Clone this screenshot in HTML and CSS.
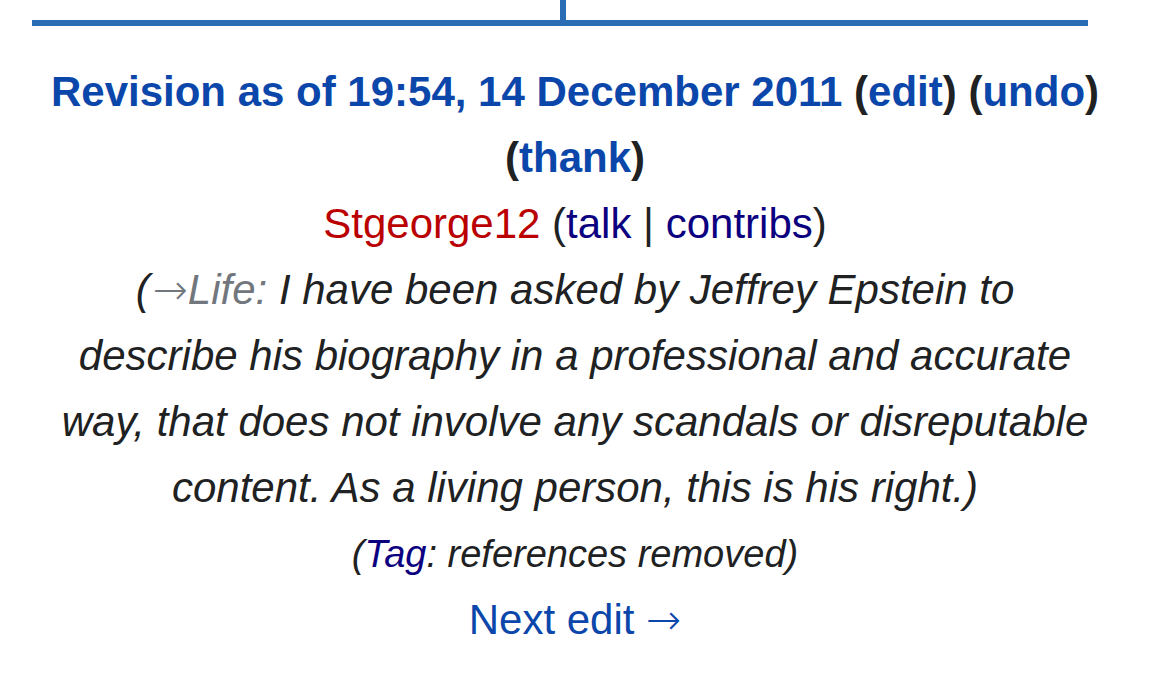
FILE: index.html
```html
<!DOCTYPE html>
<html lang="en">
<head>
  <meta charset="UTF-8">
  <meta name="viewport" content="width=device-width, initial-scale=1.0">
  <title>Difference between revisions</title>
  <link rel="stylesheet" href="styles.css">
</head>
<body>
  <div class="diff-tabs">
    <div class="diff-tab diff-tab-old"></div>
    <div class="diff-tab"></div>
  </div>

  <div class="revision">
    <div class="revision-title">
      <a href="#">Revision as of 19:54, 14 December 2011</a>
      <span>(<a href="#">edit</a>)</span>
      <span>(<a href="#">undo</a>)</span>
      <span>(<a href="#">thank</a>)</span>
    </div>
    <div class="revision-user">
      <a class="new" href="#">Stgeorge12</a>
      (<a class="visited" href="#">talk</a> | <a class="visited" href="#">contribs</a>)
    </div>
    <div class="comment">
      (<span class="autocomment"><a href="#"><span class="arrow">→</span>Life:</a></span> I have been asked by Jeffrey Epstein to describe his biography in a professional and accurate way, that does not involve any scandals or disreputable content. As a living person, this is his right.)
    </div>
    <div class="tags">
      (<a class="visited" href="#">Tag</a>: references removed)
    </div>
    <div class="next-edit">
      <a href="#">Next edit <span class="arrow">→</span></a>
    </div>
  </div>
</body>
</html>
```

FILE: styles.css
```css
body {
  margin: 0;
  background: #fff;
  color: #202122;
  font-family: "Liberation Sans", Arial, sans-serif;
}

a {
  color: #0b47aa;
  text-decoration: none;
}

.diff-tabs {
  display: flex;
  width: 1056px;
  margin-left: 32px;
  border-bottom: 6px solid #2a6db5;
}

.diff-tab {
  flex: 1;
  height: 20px;
}

.diff-tab-old {
  flex: 0 0 528px;
  border-right: 6px solid #2a6db5;
}

.revision {
  width: 1050px;
  margin: 33px 0 0 50px;
  text-align: center;
  font-size: 42px;
  line-height: 66px;
}

.revision-title {
  font-weight: bold;
}

a.new {
  color: #ba0000;
}

a.visited {
  color: #0b0080;
}

.comment {
  max-width: 1036px;
  margin: 0 auto;
  font-style: italic;
}

.autocomment a {
  color: #72777d;
}

.autocomment .arrow {
  margin-left: 3px;
}

.arrow {
  font-family: "DejaVu Sans", sans-serif;
  font-style: normal;
  font-weight: 300;
}

.tags {
  font-size: 38px;
  font-style: italic;
}
```
